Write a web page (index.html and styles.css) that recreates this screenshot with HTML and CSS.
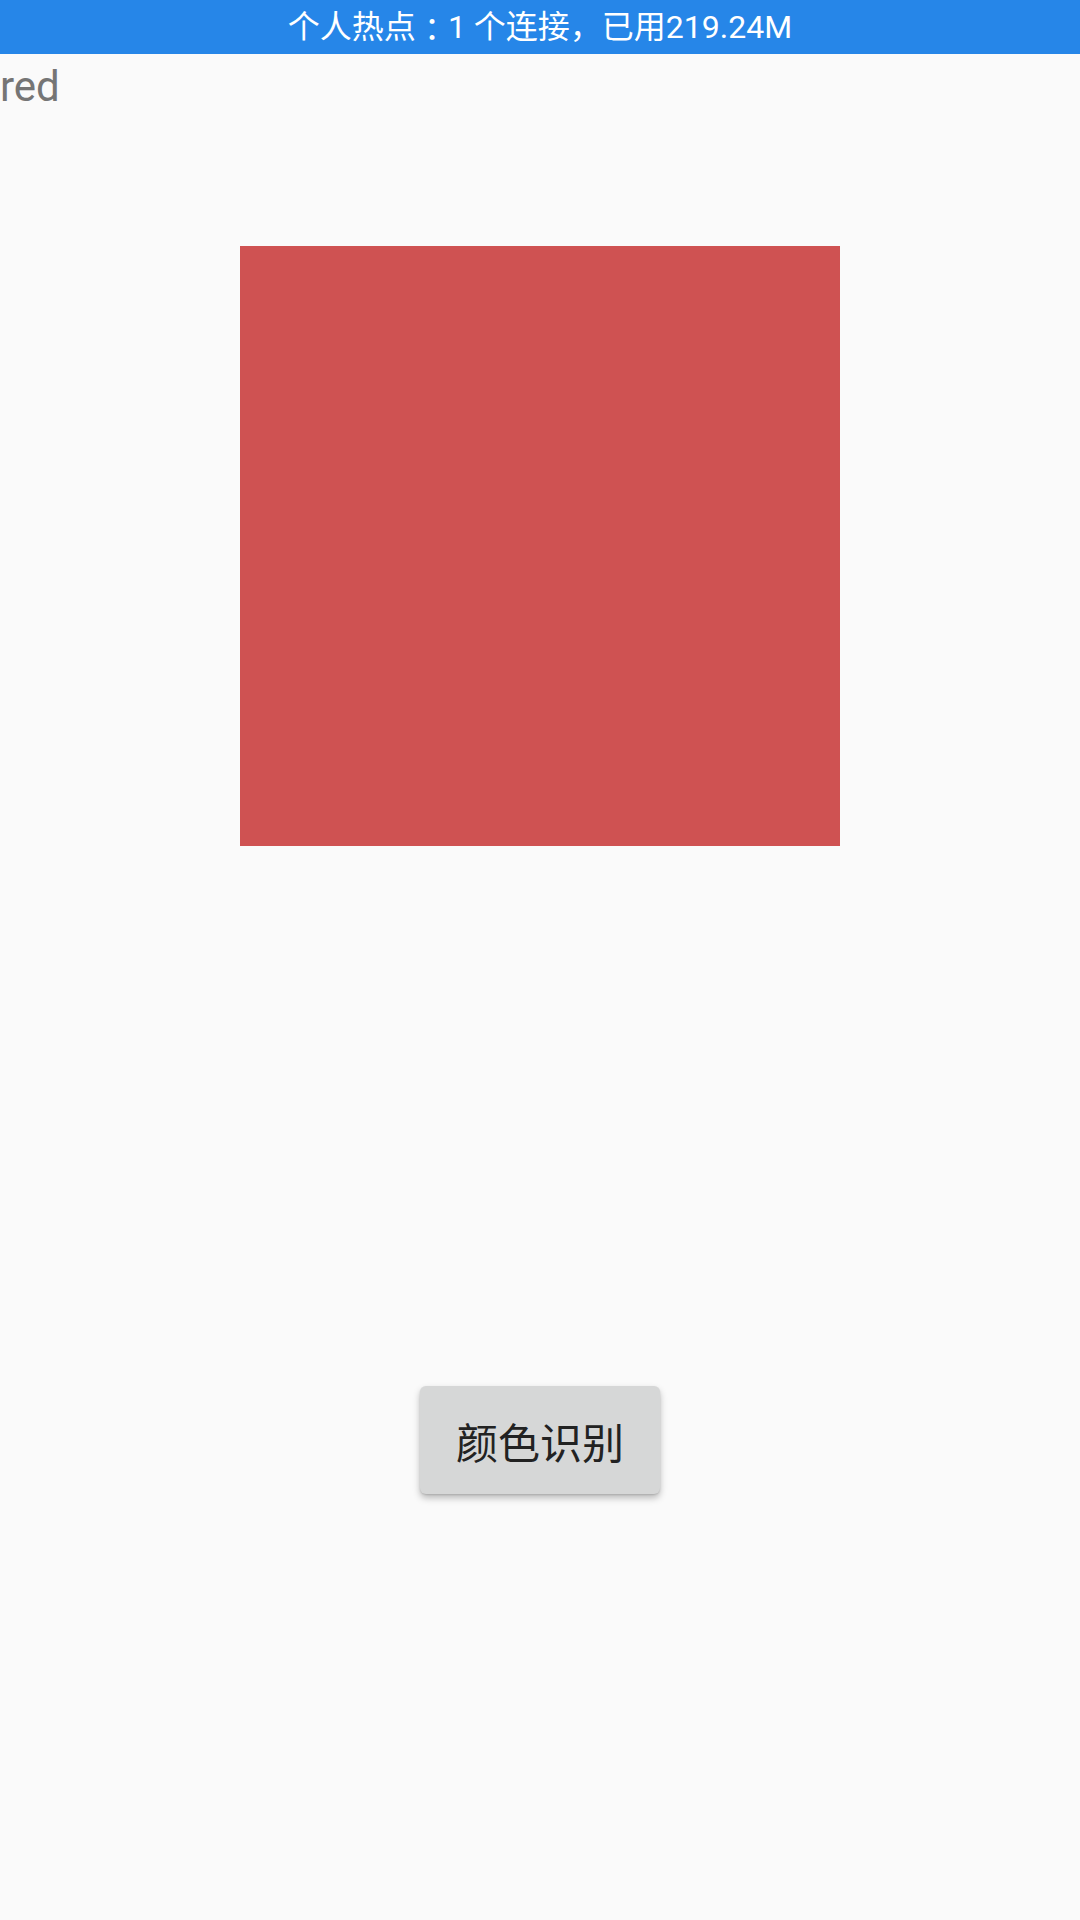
FILE: index.html
```html
<!DOCTYPE html>
<html lang="zh-CN">
<head>
<meta charset="utf-8">
<title>颜色识别</title>
<link rel="stylesheet" href="styles.css">
</head>
<body>
<div class="status">个人热点<span class="punct">：</span>1 个连接，已用219.24M</div>
<main class="content">
  <div class="label">red</div>
  <div class="swatch"></div>
  <button class="btn">颜色识别</button>
</main>
</body>
</html>
```
FILE: styles.css
```css
html, body {
  margin: 0;
  padding: 0;
  background: #fafafa;
  width: 1080px;
  height: 1920px;
  overflow: hidden;
}
.status {
  height: 54px;
  background: #2686e8;
  color: #ffffff;
  display: flex;
  align-items: center;
  justify-content: center;
  white-space: pre;
  font-family: Roboto, "Noto Sans CJK SC", sans-serif;
  font-size: 32px;
  line-height: 54px;
}
.punct {
  font-family: "Noto Sans CJK TC", sans-serif;
}
.content {
  display: flex;
  flex-direction: column;
}
.label {
  margin-top: 5px;
  font-family: Roboto, "Noto Sans CJK SC", sans-serif;
  font-size: 42px;
  line-height: 56px;
  color: #757575;
}
.swatch {
  margin: 131px auto 0;
  width: 600px;
  height: 600px;
  background: #cf5252;
}
.btn {
  margin: 540px auto 0;
  width: 240px;
  height: 108px;
  border: none;
  border-radius: 6px;
  background: #d6d7d7;
  color: #222222;
  font-family: "Noto Sans CJK SC", sans-serif;
  font-size: 42px;
  padding: 0;
  box-shadow: 0 4px 7px rgba(0, 0, 0, 0.26), 0 1px 2px rgba(0, 0, 0, 0.12);
}
```
